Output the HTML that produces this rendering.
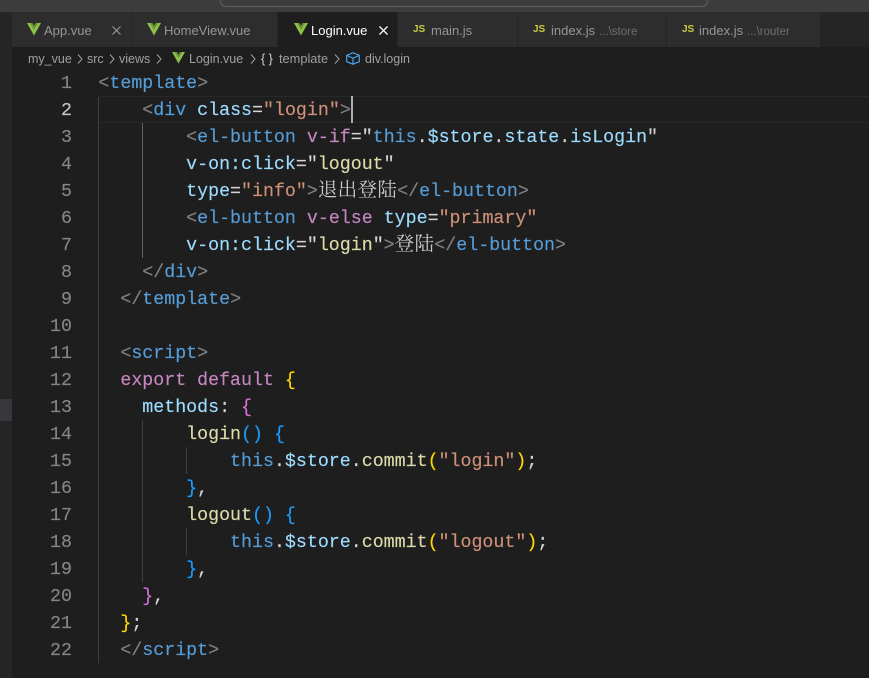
<!DOCTYPE html>
<html><head><meta charset="utf-8"><style>
html,body{margin:0;padding:0;background:#1e1e1e}
#r{position:relative;width:869px;height:678px;overflow:hidden;background:#1e1e1e;font-family:"Liberation Sans",sans-serif}
.b{position:absolute}
.tab{position:absolute;top:12px;height:35px;background:#2d2d2d}
.t{position:absolute;white-space:pre;font-size:13px;line-height:18px;color:#969696;margin-top:1px}
.l{position:absolute;left:98.4px;height:27px;line-height:27px;font-family:"Liberation Mono",monospace;font-size:18.3px;white-space:pre;color:#d4d4d4;margin-top:2px;-webkit-text-stroke:.15px}
.n{position:absolute;left:30px;width:42px;text-align:right;height:27px;line-height:27px;font-family:"Liberation Mono",monospace;font-size:18.3px;color:#858585;margin-top:2px;-webkit-text-stroke:.15px}
.g{position:absolute;width:1px;background:#404040}
.p{color:#808080}.a{color:#569cd6}.v{color:#9cdcfe}.s{color:#ce9178}.c{color:#c586c0}.y{color:#dcdcaa}.k{color:#ffd700}.o{color:#da70d6}.u{color:#179fff}
.z{font-family:"Noto Serif CJK SC",serif;font-size:19.6px;line-height:0;color:#c8c8c8;letter-spacing:.24px;-webkit-text-stroke:0}
.js{position:absolute;font-weight:bold;font-size:10px;line-height:12px;color:#cbcb41}
svg{position:absolute;overflow:visible}
</style></head><body><div id="r">
<div class="b" style="left:0;top:0;width:869px;height:12px;background:#3c3c3c"></div>
<div class="b" style="left:220px;top:-10px;width:486px;height:15px;border:1px solid #5f5f5f;border-radius:6px;background:#3c3c3c"></div>
<div class="b" style="left:0;top:12px;width:12px;height:666px;background:#252526"></div>
<div class="b" style="left:0;top:399px;width:12px;height:22px;background:#37373d"></div>
<div class="b" style="left:12px;top:12px;width:857px;height:35px;background:#252526"></div>

<div class="tab" style="left:12px;width:119px"></div>
<div class="tab" style="left:132px;width:145px"></div>
<div class="tab" style="left:278px;width:119px;background:#1e1e1e"></div>
<div class="tab" style="left:398px;width:119px"></div>
<div class="tab" style="left:518px;width:148px"></div>
<div class="tab" style="left:667px;width:153px"></div>

<svg style="left:27px;top:23px" width="14" height="13" viewBox="0 0 14 13"><path d="M0 0H3.2L7 6.2 10.8 0H14L7 12.5Z" fill="#8dc149"/><path d="M3.2 0H5.4L7 2.8 8.6 0H10.8L7 6.2Z" fill="#6a9438"/></svg>
<div class="t" style="left:44px;top:21px">App.vue</div>
<svg style="left:112px;top:26px" width="9" height="9"><path d="M.5 .5L8.5 8.5M8.5 .5L.5 8.5" stroke="#969696" stroke-width="1.2"/></svg>

<svg style="left:147px;top:23px" width="14" height="13" viewBox="0 0 14 13"><path d="M0 0H3.2L7 6.2 10.8 0H14L7 12.5Z" fill="#8dc149"/><path d="M3.2 0H5.4L7 2.8 8.6 0H10.8L7 6.2Z" fill="#6a9438"/></svg>
<div class="t" style="left:164px;top:21px">HomeView.vue</div>

<svg style="left:294px;top:23px" width="14" height="13" viewBox="0 0 14 13"><path d="M0 0H3.2L7 6.2 10.8 0H14L7 12.5Z" fill="#8dc149"/><path d="M3.2 0H5.4L7 2.8 8.6 0H10.8L7 6.2Z" fill="#6a9438"/></svg>
<div class="t" style="left:311px;top:21px;color:#fff">Login.vue</div>
<svg style="left:379px;top:26px" width="9" height="9"><path d="M.5 .5L8.5 8.5M8.5 .5L.5 8.5" stroke="#fff" stroke-width="1.3"/></svg>

<div class="js" style="left:413px;top:24px">JS</div>
<div class="t" style="left:431px;top:21px">main.js</div>
<div class="js" style="left:533px;top:24px">JS</div>
<div class="t" style="left:551px;top:21px">index.js</div>
<div class="t" style="left:599px;top:22px;font-size:11.5px;color:#6f6f6f">...\store</div>
<div class="js" style="left:682px;top:24px">JS</div>
<div class="t" style="left:699px;top:21px">index.js</div>
<div class="t" style="left:747px;top:22px;font-size:11.5px;color:#6f6f6f">...\router</div>

<div class="t" style="left:28px;top:49px;font-size:12.5px;color:#a0a0a0">my_vue</div>
<svg style="left:77px;top:54px" width="6" height="10"><path d="M1 .5L5 5 1 9.5" fill="none" stroke="#a0a0a0"/></svg>
<div class="t" style="left:87px;top:49px;font-size:12.5px;color:#a0a0a0">src</div>
<svg style="left:109px;top:54px" width="6" height="10"><path d="M1 .5L5 5 1 9.5" fill="none" stroke="#a0a0a0"/></svg>
<div class="t" style="left:119px;top:49px;font-size:12.5px;color:#a0a0a0">views</div>
<svg style="left:156px;top:54px" width="6" height="10"><path d="M1 .5L5 5 1 9.5" fill="none" stroke="#a0a0a0"/></svg>
<svg style="left:172px;top:52px" width="13" height="12" viewBox="0 0 14 13"><path d="M0 0H3.2L7 6.2 10.8 0H14L7 12.5Z" fill="#8dc149"/><path d="M3.2 0H5.4L7 2.8 8.6 0H10.8L7 6.2Z" fill="#6a9438"/></svg>
<div class="t" style="left:189px;top:49px;font-size:12.5px;color:#a0a0a0">Login.vue</div>
<svg style="left:250px;top:54px" width="6" height="10"><path d="M1 .5L5 5 1 9.5" fill="none" stroke="#a0a0a0"/></svg>
<div class="t" style="left:261px;top:49px;font-size:12.5px;color:#d4d4d4">{ }</div>
<div class="t" style="left:279px;top:49px;font-size:12.8px;color:#a0a0a0">template</div>
<svg style="left:334px;top:54px" width="6" height="10"><path d="M1 .5L5 5 1 9.5" fill="none" stroke="#a0a0a0"/></svg>
<svg style="left:346px;top:52px" width="14" height="13" viewBox="0 0 14 13"><path d="M7 .7L13.3 3.4V9.6L7 12.3 .7 9.6V3.4ZM.7 3.4L7 6.2 13.3 3.4M7 6.2V12.3" fill="none" stroke="#4daafc" stroke-width="1.1"/></svg>
<div class="t" style="left:365px;top:49px;font-size:12.5px;color:#a0a0a0">div.login</div>

<div class="b" style="left:98px;top:96px;width:771px;height:25px;border-top:1px solid #282828;border-bottom:1px solid #282828"></div>
<div class="b" style="left:351px;top:96px;width:2px;height:27px;background:#aeafad"></div>

<div class="g" style="left:98px;top:97px;height:566px"></div>
<div class="g" style="left:142px;top:123px;height:135px;background:#606060"></div>
<div class="g" style="left:142px;top:420px;height:162px"></div>
<div class="g" style="left:186px;top:447px;height:27px"></div>
<div class="g" style="left:186px;top:528px;height:27px"></div>

<div class="n" style="top:69px">1</div>
<div class="n" style="top:96px;color:#c6c6c6">2</div>
<div class="n" style="top:123px">3</div>
<div class="n" style="top:150px">4</div>
<div class="n" style="top:177px">5</div>
<div class="n" style="top:204px">6</div>
<div class="n" style="top:231px">7</div>
<div class="n" style="top:258px">8</div>
<div class="n" style="top:285px">9</div>
<div class="n" style="top:312px">10</div>
<div class="n" style="top:339px">11</div>
<div class="n" style="top:366px">12</div>
<div class="n" style="top:393px">13</div>
<div class="n" style="top:420px">14</div>
<div class="n" style="top:447px">15</div>
<div class="n" style="top:474px">16</div>
<div class="n" style="top:501px">17</div>
<div class="n" style="top:528px">18</div>
<div class="n" style="top:555px">19</div>
<div class="n" style="top:582px">20</div>
<div class="n" style="top:609px">21</div>
<div class="n" style="top:636px">22</div>

<div class="l" style="top:69px"><span class="p">&lt;</span><span class="a">template</span><span class="p">&gt;</span></div>
<div class="l" style="top:96px">    <span class="p">&lt;</span><span class="a">div</span> <span class="v">class</span>=<span class="s">"login"</span><span class="p">&gt;</span></div>
<div class="l" style="top:123px">        <span class="p">&lt;</span><span class="a">el-button</span> <span class="c">v-if</span>="<span class="a">this</span>.<span class="v">$store</span>.<span class="v">state</span>.<span class="v">isLogin</span>"</div>
<div class="l" style="top:150px">        <span class="v">v-on:click</span>="<span class="y">logout</span>"</div>
<div class="l" style="top:177px">        <span class="v">type</span>=<span class="s">"info"</span><span class="p">&gt;</span><span class="z">退出登陆</span><span class="p">&lt;/</span><span class="a">el-button</span><span class="p">&gt;</span></div>
<div class="l" style="top:204px">        <span class="p">&lt;</span><span class="a">el-button</span> <span class="c">v-else</span> <span class="v">type</span>=<span class="s">"primary"</span></div>
<div class="l" style="top:231px">        <span class="v">v-on:click</span>="<span class="y">login</span>"<span class="p">&gt;</span><span class="z">登陆</span><span class="p">&lt;/</span><span class="a">el-button</span><span class="p">&gt;</span></div>
<div class="l" style="top:258px">    <span class="p">&lt;/</span><span class="a">div</span><span class="p">&gt;</span></div>
<div class="l" style="top:285px">  <span class="p">&lt;/</span><span class="a">template</span><span class="p">&gt;</span></div>
<div class="l" style="top:339px">  <span class="p">&lt;</span><span class="a">script</span><span class="p">&gt;</span></div>
<div class="l" style="top:366px">  <span class="c">export default</span> <span class="k">{</span></div>
<div class="l" style="top:393px">  <span class="v">  methods</span>: <span class="o">{</span></div>
<div class="l" style="top:420px">        <span class="y">login</span><span class="u">()</span> <span class="u">{</span></div>
<div class="l" style="top:447px">            <span class="a">this</span>.<span class="v">$store</span>.<span class="y">commit</span><span class="k">(</span><span class="s">"login"</span><span class="k">)</span>;</div>
<div class="l" style="top:474px">        <span class="u">}</span>,</div>
<div class="l" style="top:501px">        <span class="y">logout</span><span class="u">()</span> <span class="u">{</span></div>
<div class="l" style="top:528px">            <span class="a">this</span>.<span class="v">$store</span>.<span class="y">commit</span><span class="k">(</span><span class="s">"logout"</span><span class="k">)</span>;</div>
<div class="l" style="top:555px">        <span class="u">}</span>,</div>
<div class="l" style="top:582px">    <span class="o">}</span>,</div>
<div class="l" style="top:609px">  <span class="k">}</span>;</div>
<div class="l" style="top:636px">  <span class="p">&lt;/</span><span class="a">script</span><span class="p">&gt;</span></div>
</div></body></html>
